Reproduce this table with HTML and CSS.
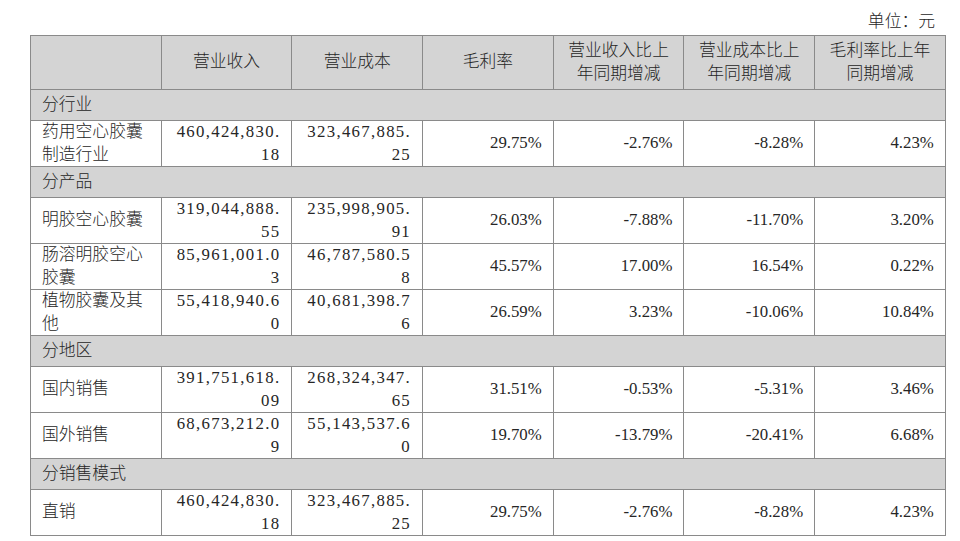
FILE: index.html
```html
<!DOCTYPE html>
<html lang="zh-CN">
<head>
<meta charset="utf-8">
<title>主营业务分析</title>
<link rel="stylesheet" href="styles.css">
</head>
<body>
<div class="page">
  <div class="unit">单位：元</div>
  <table class="report">
    <colgroup>
      <col><col><col><col><col><col><col>
    </colgroup>
    <thead>
      <tr class="head">
        <th></th>
        <th>营业收入</th>
        <th>营业成本</th>
        <th>毛利率</th>
        <th>营业收入比上<br>年同期增减</th>
        <th>营业成本比上<br>年同期增减</th>
        <th>毛利率比上年<br>同期增减</th>
      </tr>
    </thead>
    <tbody>
      <tr class="sec"><td colspan="7">分行业</td></tr>
      <tr class="data">
        <td class="label">药用空心胶囊<br>制造行业</td>
        <td class="num amt">460,424,830.<br>18</td>
        <td class="num amt">323,467,885.<br>25</td>
        <td class="num">29.75%</td>
        <td class="num">-2.76%</td>
        <td class="num">-8.28%</td>
        <td class="num">4.23%</td>
      </tr>
      <tr class="sec"><td colspan="7">分产品</td></tr>
      <tr class="data">
        <td class="label">明胶空心胶囊</td>
        <td class="num amt">319,044,888.<br>55</td>
        <td class="num amt">235,998,905.<br>91</td>
        <td class="num">26.03%</td>
        <td class="num">-7.88%</td>
        <td class="num">-11.70%</td>
        <td class="num">3.20%</td>
      </tr>
      <tr class="data">
        <td class="label">肠溶明胶空心<br>胶囊</td>
        <td class="num amt">85,961,001.0<br>3</td>
        <td class="num amt">46,787,580.5<br>8</td>
        <td class="num">45.57%</td>
        <td class="num">17.00%</td>
        <td class="num">16.54%</td>
        <td class="num">0.22%</td>
      </tr>
      <tr class="data">
        <td class="label">植物胶囊及其<br>他</td>
        <td class="num amt">55,418,940.6<br>0</td>
        <td class="num amt">40,681,398.7<br>6</td>
        <td class="num">26.59%</td>
        <td class="num">3.23%</td>
        <td class="num">-10.06%</td>
        <td class="num">10.84%</td>
      </tr>
      <tr class="sec"><td colspan="7">分地区</td></tr>
      <tr class="data">
        <td class="label">国内销售</td>
        <td class="num amt">391,751,618.<br>09</td>
        <td class="num amt">268,324,347.<br>65</td>
        <td class="num">31.51%</td>
        <td class="num">-0.53%</td>
        <td class="num">-5.31%</td>
        <td class="num">3.46%</td>
      </tr>
      <tr class="data">
        <td class="label">国外销售</td>
        <td class="num amt">68,673,212.0<br>9</td>
        <td class="num amt">55,143,537.6<br>0</td>
        <td class="num">19.70%</td>
        <td class="num">-13.79%</td>
        <td class="num">-20.41%</td>
        <td class="num">6.68%</td>
      </tr>
      <tr class="sec"><td colspan="7">分销售模式</td></tr>
      <tr class="data">
        <td class="label">直销</td>
        <td class="num amt">460,424,830.<br>18</td>
        <td class="num amt">323,467,885.<br>25</td>
        <td class="num">29.75%</td>
        <td class="num">-2.76%</td>
        <td class="num">-8.28%</td>
        <td class="num">4.23%</td>
      </tr>
    </tbody>
  </table>
</div>
</body>
</html>
```
FILE: styles.css
```css
html, body {
  margin: 0;
  padding: 0;
  background: #ffffff;
}

body {
  font-family: "Liberation Serif", "Noto Sans CJK SC", serif;
  font-size: 16.8px;
  font-weight: 300;
  color: #262626;
}

.page {
  width: 915px;
  padding-left: 30px;
}

.unit {
  text-align: right;
  padding: 11px 10px 2px 0;
  line-height: 22px;
}

.report {
  width: 915px;
  table-layout: fixed;
  border-collapse: collapse;
  border: 1px solid #8a8a8a;
}

.report col {
  width: 130.7px;
}

.report th,
.report td {
  border: 1px solid #8a8a8a;
  padding: 0 11px;
  line-height: 22.5px;
  vertical-align: middle;
  overflow: hidden;
  white-space: nowrap;
}

.report th {
  font-weight: 300;
  background: #d4d4d4;
  text-align: center;
}

.head {
  height: 54px;
}

.sec {
  height: 31px;
}

.sec td {
  background: #d4d4d4;
  text-align: left;
}

.data {
  height: 46px;
}

.label {
  text-align: left;
}

.num {
  text-align: right;
}

.amt {
  letter-spacing: 1.3px;
}
```
